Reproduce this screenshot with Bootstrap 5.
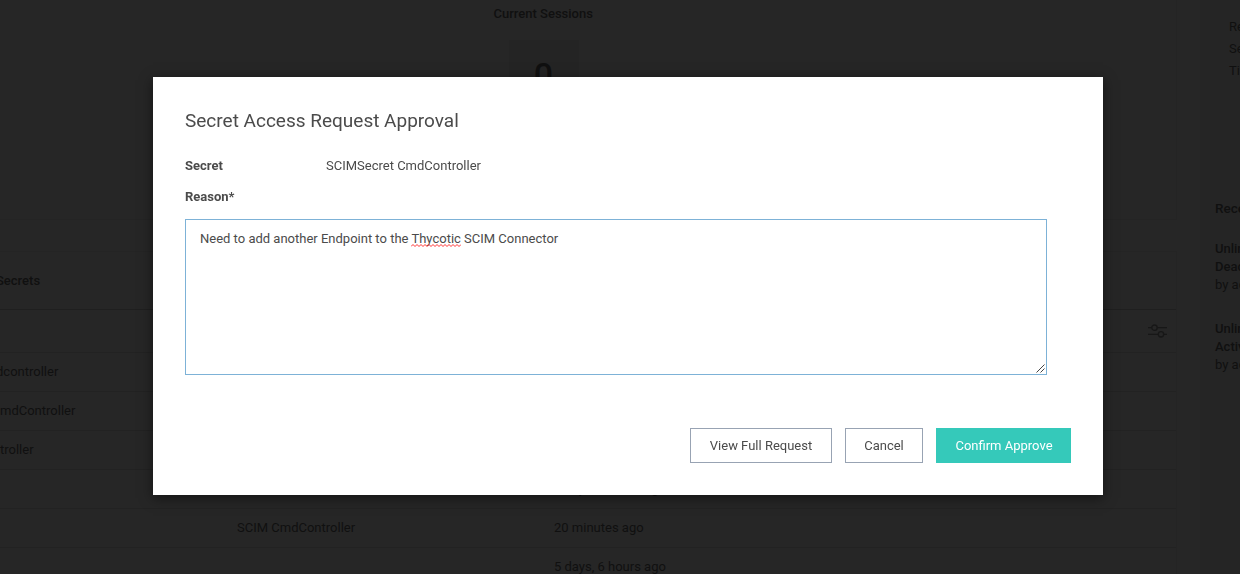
<!DOCTYPE html>
<html lang="en">
<head>
<meta charset="utf-8">
<meta name="viewport" content="width=device-width, initial-scale=1">
<title>Secret Access Request Approval</title>
<link href="https://cdn.jsdelivr.net/npm/bootstrap@5.3.0/dist/css/bootstrap.min.css" rel="stylesheet">
<style>
  body { font-family: Roboto, "Liberation Sans", sans-serif; font-size: 13px; line-height: 18px; color: #101010; background: #262626; height: 574px; overflow: hidden; }
  .dash { height: 574px; }
  .dash-main { width: 1177px; }
  .dash-side { width: 40px; margin-left: 23px; padding-left: 15px; background: #252525; white-space: nowrap; }
  .panel { border-right: 1px solid #242424; border-bottom: 1px solid #242424; }
  .sessions { height: 220px; padding-top: 5px; }
  .sessions-inner { width: 102px; margin-left: 493.5px; }
  .count { width: 70px; height: 70px; margin: 17px 0 0 15px; background: #242424; font-size: 34px; line-height: 70px; font-weight: 500; }
  .recent { margin-top: 31px; height: 400px; border-top: 1px solid #242424; }
  .recent-title { height: 57px; }
  .line-row { height: 39px; border-top: 1px solid #222; white-space: nowrap; }
  .filter-row { height: 43px; border-top: 1px solid #1f1f1f; padding-right: 8px; }
  .cell-name { width: 237px; }
  .cell-name span { margin-left: -4px; }
  .cell-folder { width: 317px; }
  .stats { padding: 16px 0 0 14px; height: 199px; line-height: 22px; }
  .fs-side { font-size: 13.5px; font-weight: 500; }
  .semi { font-weight: 500; }
  .approval .modal-dialog { width: 950px; max-width: none; margin: 77px 0 0 153px; }
  .approval .modal-content { height: 418px; border: 0; border-radius: 0; padding: 32px; color: #4b4b4b; box-shadow: 0 3px 12px rgba(0,0,0,.5); }
  .approval h1 { font-size: 19px; line-height: 24px; font-weight: 400; margin: 0 0 24px; }
  .field-label { width: 141px; font-weight: 700; }
  .reason-label { margin-top: 13px; }
  .reason-box { width: 862px; height: 156px; margin-top: 13px; padding: 10px 14px; border: 1px solid #7db2d7; border-radius: 0; font-size: 13px; line-height: 18px; color: #4b4b4b; }
  .misspelt { position: relative; }
  .misspelt svg { position: absolute; left: 0; bottom: -1px; }
  .grip { right: 0; bottom: 0; }
  .approval .btn { height: 35px; padding: 0; border-radius: 0; font-size: 13px; line-height: 18px; color: #4b4b4b; border: 1px solid #98a3b3; }
  .approval .btn-go { width: 135px; padding-left: 1px; color: #fff; background: #35c9ba; border-color: #35c9ba; }
  .btn-view { width: 142px; }
  .btn-cancel { width: 78px; }
  .actions { gap: 13px; margin-top: 53px; }
</style>
</head>
<body>
<div class="dash d-flex overflow-hidden">
  <main class="dash-main flex-shrink-0">
    <section class="panel sessions">
      <div class="sessions-inner semi text-nowrap">Current Sessions
        <div class="count text-center">0</div>
      </div>
    </section>
    <section class="panel recent">
      <div class="recent-title d-flex align-items-center cell-name semi"><span>Secrets</span></div>
      <div class="filter-row d-flex align-items-center justify-content-end">
        <svg width="20" height="14" viewBox="0 0 20 14" fill="none" stroke="#171717" stroke-width="1.3"><path d="M0 3.7h3.7M9.3 3.7H19M0 10.3h10.2M15.8 10.3H19"/><circle cx="6.5" cy="3.7" r="2.7"/><circle cx="13" cy="10.3" r="2.7"/></svg>
      </div>
      <div class="line-row d-flex align-items-center"><div class="cell-name"><span>dcontroller</span></div></div>
      <div class="line-row d-flex align-items-center"><div class="cell-name ps-1"><span>mdController</span></div></div>
      <div class="line-row d-flex align-items-center"><div class="cell-name ps-1"><span>troller</span></div></div>
      <div class="line-row d-flex align-items-center"><div class="cell-name"></div><div class="cell-folder"></div><div>5 days, 6 hours ago</div></div>
      <div class="line-row d-flex align-items-center"><div class="cell-name"></div><div class="cell-folder">SCIM CmdController</div><div>20 minutes ago</div></div>
      <div class="line-row d-flex align-items-center"><div class="cell-name"></div><div class="cell-folder"></div><div>5 days, 6 hours ago</div></div>
    </section>
  </main>
  <aside class="dash-side overflow-hidden flex-shrink-0">
    <div class="stats"><div>Re</div><div>Se</div><div>Ti</div></div>
    <div class="fs-side">Rece</div>
    <div style="margin-top:23px"><div class="semi">Unlimi</div><div class="semi">Deacti</div><div>by adm</div></div>
    <div style="margin-top:26px"><div class="semi">Unlimi</div><div class="semi">Activat</div><div>by adm</div></div>
  </aside>
</div>

<div class="modal d-block overflow-hidden approval" tabindex="-1" role="dialog" aria-modal="true">
  <div class="modal-dialog">
    <div class="modal-content">
      <h1>Secret Access Request Approval</h1>
      <div class="d-flex"><div class="field-label">Secret</div><div>SCIMSecret CmdController</div></div>
      <div class="field-label reason-label">Reason*</div>
      <div class="form-control reason-box position-relative">Need to add another Endpoint to the <span class="misspelt">Thycotic<svg width="50" height="3" viewBox="0 0 50 3" fill="none" stroke="#f33" stroke-width="1"><path d="M0 2.5l2-2 2 2 2-2 2 2 2-2 2 2 2-2 2 2 2-2 2 2 2-2 2 2 2-2 2 2 2-2 2 2 2-2 2 2 2-2 2 2 2-2 2 2 2-2 2 2 2-2"/></svg></span> SCIM Connector
        <svg class="grip position-absolute" width="10" height="10" viewBox="0 0 10 10" stroke="#444" stroke-width="1"><path d="M0.5 8.5l8-8M4.5 8.5l4-4"/></svg>
      </div>
      <div class="actions d-flex justify-content-end">
        <button type="button" class="btn btn-view">View Full Request</button>
        <button type="button" class="btn btn-cancel">Cancel</button>
        <button type="button" class="btn btn-go">Confirm Approve</button>
      </div>
    </div>
  </div>
</div>
<script src="https://cdn.jsdelivr.net/npm/bootstrap@5.3.0/dist/js/bootstrap.bundle.min.js"></script>
</body>
</html>
